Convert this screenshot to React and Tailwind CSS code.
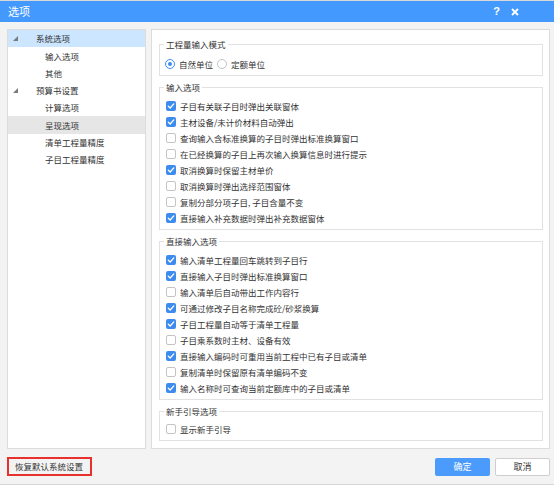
import React from 'react'

const font = { fontFamily: '"Noto Sans CJK SC", "Noto Sans", sans-serif' }

const tree = [
  { label: '系统选项', level: 1, state: 'active' },
  { label: '输入选项', level: 2 },
  { label: '其他', level: 2 },
  { label: '预算书设置', level: 1 },
  { label: '计算选项', level: 2 },
  { label: '呈现选项', level: 2, state: 'hover' },
  { label: '清单工程量精度', level: 2 },
  { label: '子目工程量精度', level: 2 },
]

const inputOptions = [
  ['子目有关联子目时弹出关联窗体', true],
  ['主材设备/未计价材料自动弹出', true],
  ['查询输入含标准换算的子目时弹出标准换算窗口', false],
  ['在已经换算的子目上再次输入换算信息时进行提示', false],
  ['取消换算时保留主材单价', true],
  ['取消换算时弹出选择范围窗体', false],
  ['复制分部分项子目, 子目含量不变', false],
  ['直接输入补充数据时弹出补充数据窗体', true],
]

const directOptions = [
  ['输入清单工程量回车跳转到子目行', true],
  ['直接输入子目时弹出标准换算窗口', true],
  ['输入清单后自动带出工作内容行', false],
  ['可通过修改子目名称完成砼/砂浆换算', true],
  ['子目工程量自动等于清单工程量', true],
  ['子目乘系数时主材、设备有效', false],
  ['直接输入编码时可重用当前工程中已有子目或清单', true],
  ['复制清单时保留原有清单编码不变', false],
  ['输入名称时可查询当前定额库中的子目或清单', true],
]

function Check({ label, checked }) {
  return (
    <div className="flex items-center h-[16px] pl-[6px]">
      {checked ? (
        <span className="w-[10px] h-[10px] rounded-[2px] bg-[#3d8ced] flex items-center justify-center">
          <svg width="8" height="8" viewBox="0 0 8 8">
            <path d="M1.3 4.2 3.2 6 6.8 1.9" fill="none" stroke="#fff" strokeWidth="1.3" strokeLinecap="round" strokeLinejoin="round" />
          </svg>
        </span>
      ) : (
        <span className="w-[10px] h-[10px] rounded-[2px] border border-[#c4c4c4] bg-white" />
      )}
      <span className="ml-[4px] text-[8.5px] text-[#333]">{label}</span>
    </div>
  )
}

function Radio({ label, checked }) {
  return (
    <div className="flex items-center">
      <span className={`w-[10px] h-[10px] rounded-full border bg-white flex items-center justify-center ${checked ? 'border-[#3d8ced]' : 'border-[#c4c4c4]'}`}>
        {checked && <span className="w-[4px] h-[4px] rounded-full bg-[#3d8ced]" />}
      </span>
      <span className="ml-[4px] text-[8.5px] text-[#333]">{label}</span>
    </div>
  )
}

function Group({ title, children, className = '' }) {
  return (
    <fieldset className={`border border-[#e2e2e2] px-0 ${className}`}>
      <legend className="ml-[4px] px-[2px] text-[8.5px] leading-[16px] text-[#333]">{title}</legend>
      {children}
    </fieldset>
  )
}

export default function App() {
  return (
    <div className="w-[554px] h-[485px] bg-[#f3f3f3] flex flex-col border-b border-[#d6d6d6]" style={font}>
      {/* Title bar */}
      <div className="h-[22px] bg-[#4499ff] border-t border-[#d9d9d9] flex items-center px-[8px] text-white">
        <span className="text-[11px]">选项</span>
        <span className="ml-auto text-[11px] font-bold" style={{ fontFamily: '"Liberation Sans", sans-serif' }}>?</span>
        <svg className="ml-[11px] mr-[27px]" width="8" height="8" viewBox="0 0 8 8">
          <path d="M1 1 7 7M7 1 1 7" stroke="#fff" strokeWidth="1.8" />
        </svg>
      </div>

      {/* Body */}
      <div className="flex gap-[5px] pt-[7px] pl-[7px] pr-[4px]">
        {/* Tree */}
        <div className="w-[139px] h-[420px] bg-white border border-[#dcdcdc]">
          {tree.map(item => (
            <div
              key={item.label}
              className={`h-[17.3px] flex items-center text-[8.5px] text-[#333] ${item.state === 'active' ? 'bg-[#cce6ff]' : item.state === 'hover' ? 'bg-[#e6e6e6]' : ''}`}
            >
              {item.level === 1 ? (
                <>
                  <svg className="ml-[5px]" width="5" height="5" viewBox="0 0 5 5">
                    <path d="M5 0V5H0Z" fill="#7a7a7a" />
                  </svg>
                  <span className="ml-[18px]">{item.label}</span>
                </>
              ) : (
                <span className="ml-[37px]">{item.label}</span>
              )}
            </div>
          ))}
        </div>

        {/* Options panel */}
        <div className="w-[399px] h-[420px] bg-white border border-[#dcdcdc] pl-[7px] pr-[6px] pt-[6px] flex flex-col gap-[3px]">
          <Group title="工程量输入模式" className="pb-[3px]">
            <div className="flex items-center gap-[4px] h-[16px] mt-[4px] pl-[5px]">
              <Radio label="自然单位" checked />
              <Radio label="定额单位" />
            </div>
          </Group>

          <Group title="输入选项" className="pb-[3px]">
            <div className="mt-[3px]">
              {inputOptions.map(([label, c]) => <Check key={label} label={label} checked={c} />)}
            </div>
          </Group>

          <Group title="直接输入选项" className="pb-[3px]">
            <div className="mt-[3px]">
              {directOptions.map(([label, c]) => <Check key={label} label={label} checked={c} />)}
            </div>
          </Group>

          <Group title="新手引导选项" className="pb-[3px]">
            <div className="mt-[2px]">
              <Check label="显示新手引导" checked={false} />
            </div>
          </Group>
        </div>
      </div>

      {/* Footer */}
      <div className="flex items-center mt-[8px] pl-[7px] pr-[4px]">
        <button className="h-[19px] w-[85px] border-2 border-[#e8302c] pl-[6px] text-left text-[8.5px] text-[#333]">
          恢复默认系统设置
        </button>
        <button className="ml-auto h-[18px] w-[55px] bg-[#4a9bfb] rounded-[2px] text-white text-[9px]">
          确定
        </button>
        <button className="ml-[5px] h-[18px] w-[55px] bg-white border border-[#cfcfcf] rounded-[2px] text-[#333] text-[9px]">
          取消
        </button>
      </div>
    </div>
  )
}
